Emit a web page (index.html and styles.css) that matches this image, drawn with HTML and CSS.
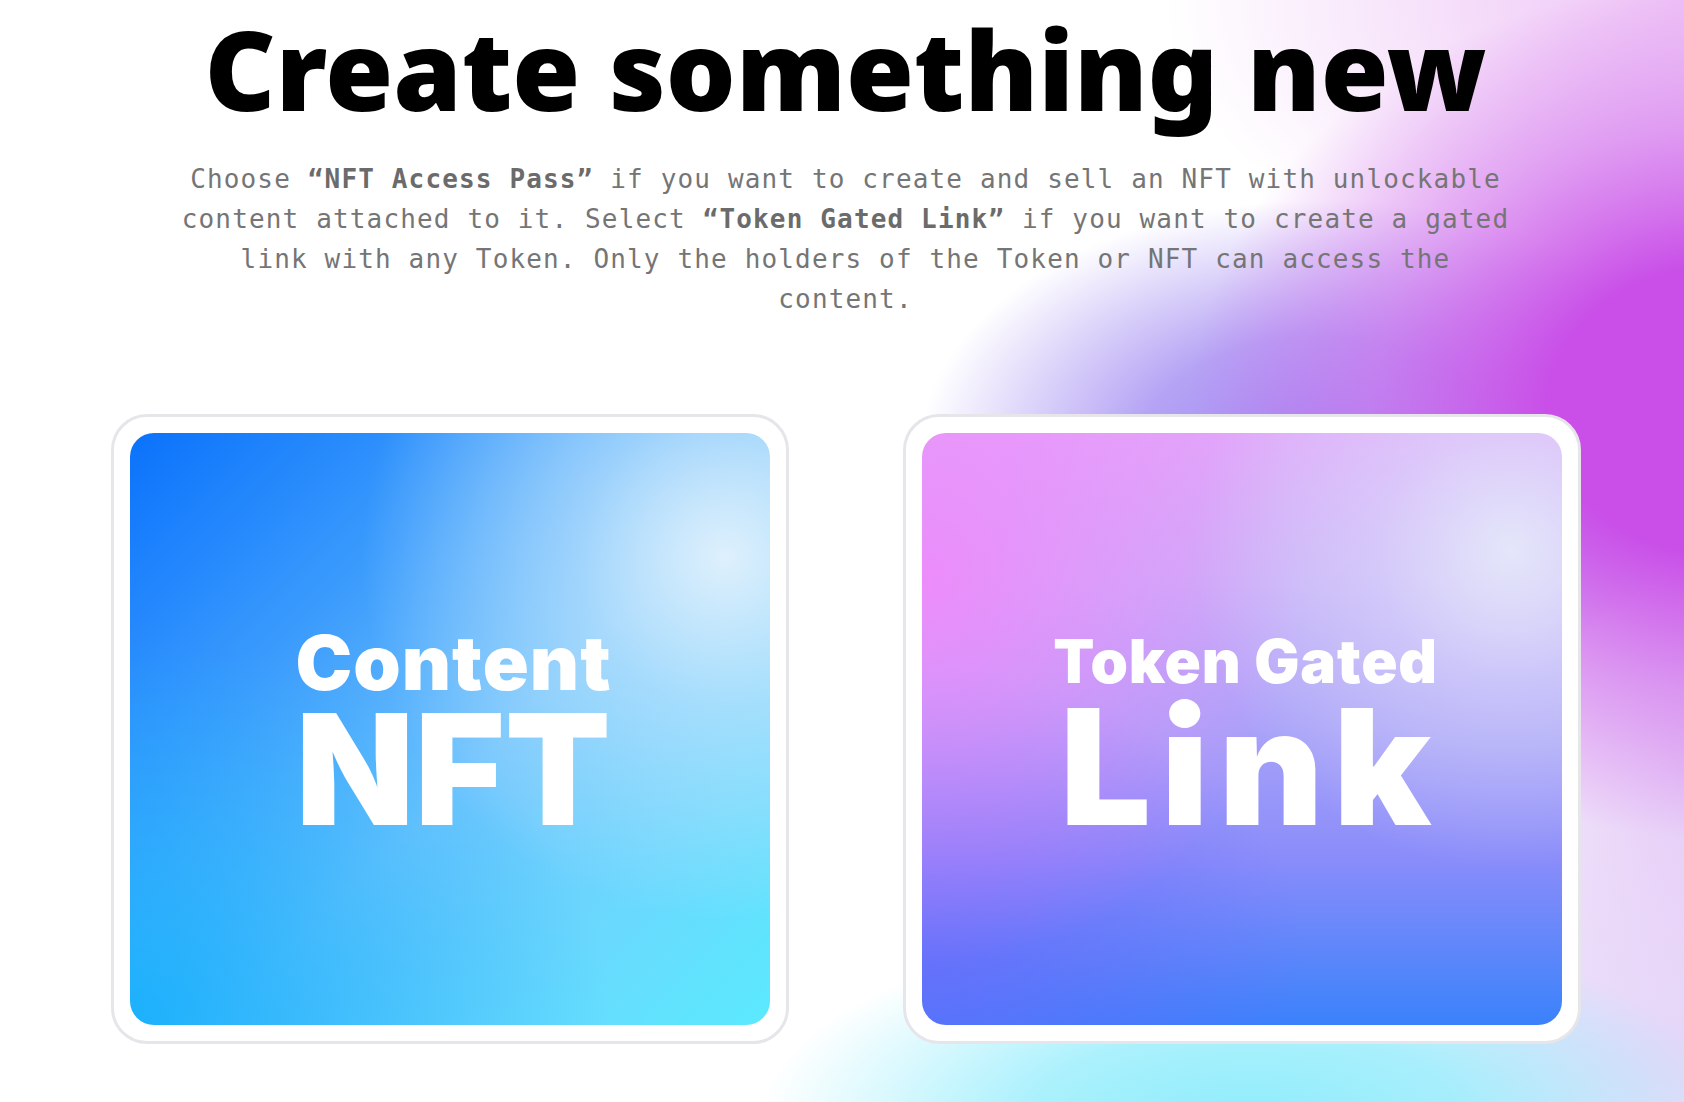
FILE: index.html
```html
<!DOCTYPE html>
<html lang="en">
<head>
<meta charset="utf-8">
<title>Create something new</title>
<link rel="stylesheet" href="styles.css">
</head>
<body>
<main class="page">
  <h1 class="title">Create something new</h1>
  <p class="intro">Choose <b>“NFT Access Pass”</b> if you want to create and sell an NFT with unlockable content attached to it. Select <b>“Token Gated Link”</b> if you want to create a gated link with any Token. Only the holders of the Token or NFT can access the content.</p>
  <div class="cards">
    <a class="card" href="#">
      <div class="art art-nft">
        <span class="art-small">Content</span>
        <span class="art-big">NFT</span>
      </div>
    </a>
    <a class="card" href="#">
      <div class="art art-link">
        <span class="art-small art-small-link">Token Gated</span>
        <span class="art-big art-big-link">Link</span>
      </div>
    </a>
  </div>
</main>
</body>
</html>
```
FILE: styles.css
```css
html, body {
  margin: 0;
  height: 100%;
}
body {
  background:
    radial-gradient(ellipse 540px 430px at 1730px 410px, rgba(201,79,232,1) 0%, rgba(201,79,232,1) 34%, rgba(208,110,236,0.6) 66%, rgba(220,170,244,0) 100%),
    radial-gradient(ellipse 400px 250px at 1320px 450px, rgba(160,136,242,1) 0%, rgba(162,140,242,0.8) 45%, rgba(200,190,248,0) 100%),
    radial-gradient(ellipse 520px 300px at 1684px 0px, rgba(238,196,246,1) 0%, rgba(238,196,246,0) 100%),
    radial-gradient(ellipse 490px 200px at 1250px 1122px, rgba(142,236,252,1) 0%, rgba(142,236,252,0.75) 45%, rgba(142,236,252,0) 100%),
    radial-gradient(ellipse 360px 520px at 1720px 760px, rgba(228,200,246,1) 0%, rgba(228,200,246,0) 100%),
    radial-gradient(ellipse 420px 300px at 1700px 1060px, rgba(228,224,250,1) 0%, rgba(228,224,250,0) 100%),
    #ffffff;
  background-repeat: no-repeat;
  overflow: hidden;
  font-family: "Noto Sans", "Open Sans", sans-serif;
}
.page {
  display: flex;
  flex-direction: column;
  align-items: center;
  padding-left: 7px;
}
.title {
  margin: 0;
  padding-top: 4px;
  font-family: "Noto Sans", sans-serif;
  font-weight: 900;
  font-size: 110px;
  line-height: 128px;
  color: #000;
  letter-spacing: 0px;
}
.intro {
  margin: 27px 0 0;
  max-width: 1340px;
  text-align: center;
  font-family: "DejaVu Sans Mono", monospace;
  font-size: 26px;
  letter-spacing: 1.15px;
  line-height: 40px;
  color: #757575;
}
.intro b {
  font-weight: 700;
  color: #6b6b6b;
}
.cards {
  display: flex;
  gap: 114px;
  margin-top: 95px;
}
.card {
  display: block;
  width: 640px;
  height: 592px;
  padding: 16px;
  border: 3px solid #e6e6ea;
  border-radius: 36px;
  background: #ffffff;
  text-decoration: none;
}
.art {
  box-sizing: border-box;
  width: 100%;
  height: 100%;
  padding-left: 8px;
  border-radius: 24px;
  display: flex;
  flex-direction: column;
  align-items: center;
  justify-content: center;
  color: #ffffff;
  font-family: "Inter", sans-serif;
  font-weight: 900;
}
.art-nft {
  background:
    radial-gradient(circle at 93% 21%, rgba(222,240,252,1) 0%, rgba(200,230,252,0.6) 20%, rgba(200,230,252,0) 48%),
    radial-gradient(ellipse 75% 65% at 0% 100%, rgba(20,176,252,0.9) 0%, rgba(20,176,252,0) 100%),
    linear-gradient(135deg, #0a72fc 0%, #3c9cfc 30%, #70c4fc 55%, #6ad8fd 78%, #5aeafe 100%);
}
.art-link {
  background:
    radial-gradient(circle at 92% 20%, rgba(228,230,250,1) 0%, rgba(220,220,250,0.55) 18%, rgba(220,220,250,0) 42%),
    radial-gradient(ellipse 60% 65% at 0% 25%, rgba(240,136,251,0.9) 0%, rgba(240,136,251,0) 100%),
    radial-gradient(ellipse 60% 50% at 0% 90%, rgba(108,104,250,0.7) 0%, rgba(108,104,250,0) 100%),
    linear-gradient(180deg, #e0a8fa 0%, #c8b0f8 25%, #a8a2f8 50%, #8a8cfa 72%, #3a82fb 100%);
}
.art-small {
  font-size: 76px;
  line-height: 76px;
  letter-spacing: 1px;
  margin-top: -5px;
}
.art-big {
  font-size: 154px;
  line-height: 120px;
  letter-spacing: 0.5px;
  margin-top: 9px;
}
.art-small-link {
  font-size: 60px;
  line-height: 60px;
  letter-spacing: 0.8px;
  margin-top: 0;
}
.art-big-link {
  font-size: 161px;
  letter-spacing: 10px;
  margin-top: 16px;
  margin-right: -10px;
}
```
